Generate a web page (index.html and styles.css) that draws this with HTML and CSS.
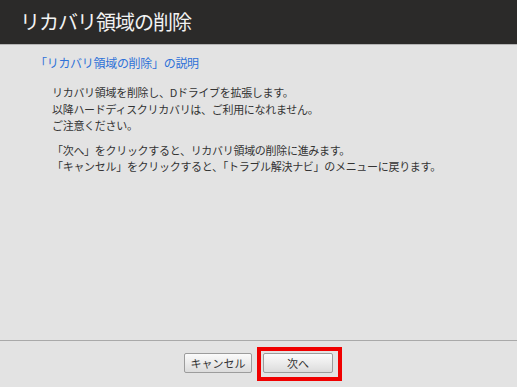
FILE: index.html
```html
<!DOCTYPE html>
<html lang="ja">
<head>
  <meta charset="UTF-8" />
  <meta name="viewport" content="width=device-width, initial-scale=1.0"/>
  <title>リカバリ領域の削除</title>
  <link rel="stylesheet" href="styles.css">
</head>
<body>
  <header>
    <h1>リカバリ領域の削除</h1>
  </header>

  <div class="main-content">
    <h2>「リカバリ領域の削除」の説明</h2>
    <div class="desc">
      <p>リカバリ領域を削除し、Dドライブを拡張します。<br>以降ハードディスクリカバリは、ご利用になれません。<br>ご注意ください。</p>
      <p>「次へ」をクリックすると、リカバリ領域の削除に進みます。<br>「キャンセル」をクリックすると、「トラブル解決ナビ」のメニューに戻ります。</p>
    </div>
  </div>

  <footer>
    <button class="btn">キャンセル</button>
    <span class="highlight"><button class="btn btn-next">次へ</button></span>
  </footer>
</body>
</html>
```

FILE: styles.css
```css
html, body {
  margin: 0;
  padding: 0;
}

body {
  font-family: "Noto Sans CJK JP", "Noto Sans", sans-serif;
  background: #e3e3e3;
  color: #333;
  width: 517px;
  height: 387px;
  display: flex;
  flex-direction: column;
  overflow: hidden;
}

header {
  background: #2b2a29;
  height: 44px;
  border-bottom: 1px solid #b4b4b4;
  padding-left: 20px;
  display: flex;
  align-items: center;
}

header h1 {
  margin: 0;
  font-size: 20px;
  font-weight: normal;
  color: #f2f2f2;
  letter-spacing: -1px;
  line-height: 1;
  padding-bottom: 1px;
}

.main-content {
  flex: 1;
}

.main-content h2 {
  margin: 10px 0 0 35px;
  font-size: 12px;
  font-weight: normal;
  color: #2f72d8;
  letter-spacing: -0.3px;
  line-height: 16px;
}

.desc {
  padding-left: 52px;
  margin-top: 13px;
}

.desc p {
  margin: 0 0 8px;
  font-size: 11px;
  line-height: 16.5px;
  letter-spacing: -0.3px;
}

footer {
  height: 47px;
  border-top: 1px solid #a9a9a9;
  display: flex;
  justify-content: center;
  align-items: flex-start;
  gap: 11px;
  padding-top: 12px;
  box-sizing: border-box;
}

.btn {
  font-family: "Noto Sans CJK JP", "Noto Sans", sans-serif;
  font-size: 11px;
  color: #333;
  width: 68px;
  height: 20px;
  padding: 0;
  border: 1px solid #9c9c9c;
  border-radius: 2px;
  background: linear-gradient(#fbfbfb, #dcdcdc);
  display: block;
}

.btn-next {
  width: 70px;
}

.highlight {
  position: relative;
  display: block;
}

.highlight::after {
  content: "";
  position: absolute;
  top: -6px;
  left: -6px;
  right: -9px;
  bottom: -8px;
  border: 4px solid #f00000;
}
```
